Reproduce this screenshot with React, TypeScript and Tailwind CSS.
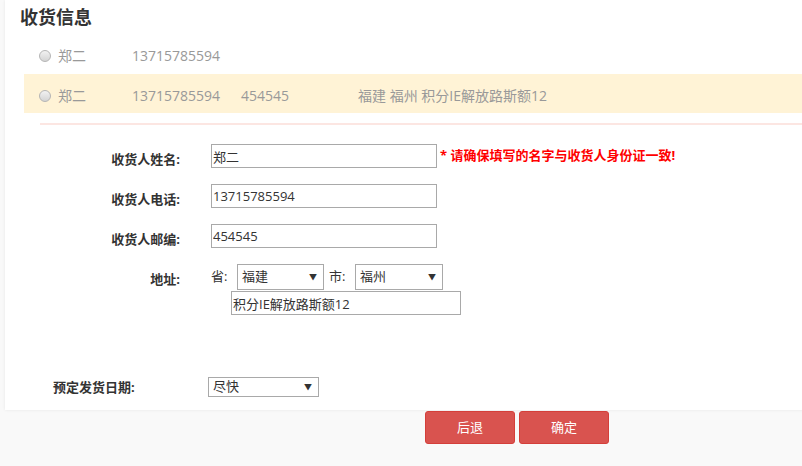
import { useState } from 'react';

const FONT = '"Open Sans", "Noto Sans CJK SC", sans-serif';

type Addr = { name: string; phone: string; zip?: string; address?: string };

const addresses: Addr[] = [
  { name: '郑二', phone: '13715785594' },
  { name: '郑二', phone: '13715785594', zip: '454545', address: '福建 福州 积分IE解放路斯额12' },
];

function Radio() {
  return (
    <span className="inline-block w-[12px] h-[12px] rounded-full border border-[#b5b5b5] bg-gradient-to-b from-[#f2f2f2] to-[#d4d4d4]" />
  );
}

function Select({ value, width, height }: { value: string; width: string; height: string }) {
  return (
    <div className={`relative ${width} ${height} border border-[#a9a9a9] bg-white flex items-center`}>
      <span className="pl-[4px] text-[13px] text-[#333]">{value}</span>
      <span className="absolute right-[6px] top-1/2 -translate-y-1/2 text-[8px] text-[#333] leading-none">▼</span>
    </div>
  );
}

function Field({ label, value }: { label: string; value: string }) {
  return (
    <div className="flex items-center h-[40px]">
      <div className="w-[175px] pt-[7px] text-right text-[13px] font-bold text-[#333]">{label}</div>
      <input
        defaultValue={value}
        className="ml-[31px] w-[226px] h-[24px] border border-[#a9a9a9] px-[1px] text-[13px] text-[#333] outline-none"
      />
    </div>
  );
}

export default function App() {
  const [selected] = useState<number | null>(null);

  return (
    <div className="w-[802px] h-[466px] bg-[#f9f9f9] overflow-hidden" style={{ fontFamily: FONT }}>
      <div className="ml-[5px] w-[820px] h-[410px] bg-white shadow-[0_0_3px_rgba(0,0,0,0.08)] flex flex-col">
        <div className="h-[37px] pl-[15px] pt-[4px] text-[18px] font-bold text-[#333] leading-[27px]">收货信息</div>

        <div className="flex flex-col">
          {addresses.map((a, i) => (
            <div
              key={i}
              className={
                i === 1
                  ? 'ml-[19px] h-[39px] pt-[4px] bg-[#fff3d6] flex items-center text-[14px] text-[#999]'
                  : 'ml-[19px] h-[37px] flex items-center text-[14px] text-[#999]'
              }
            >
              <span className="ml-[15px] w-[19px] flex items-center">
                <Radio />
              </span>
              <span className="w-[74px]">{a.name}</span>
              <span className="w-[109px]">{a.phone}</span>
              {a.zip && <span className="w-[117px]">{a.zip}</span>}
              {a.address && <span>{a.address}</span>}
              {selected === i && null}
            </div>
          ))}
        </div>

        <div className="ml-[35px] mt-[10px] h-[2px] bg-[#fce6e2]" />

        <div className="mt-[11px] flex flex-col">
          <div className="flex items-center">
            <Field label="收货人姓名:" value="郑二" />
            <span className="ml-[3px] text-[13px] font-bold text-[#ff0000]">* 请确保填写的名字与收货人身份证一致!</span>
          </div>
          <Field label="收货人电话:" value="13715785594" />
          <Field label="收货人邮编:" value="454545" />

          <div className="flex items-start mt-[8px]">
            <div className="w-[175px] text-right text-[13px] font-bold text-[#333] pt-[6px]">地址:</div>
            <div className="ml-[31px] flex flex-col">
              <div className="flex items-center text-[13px] text-[#333]">
                <span className="w-[26px]">省:</span>
                <Select value="福建" width="w-[87px]" height="h-[26px]" />
                <span className="ml-[5px] w-[26px]">市:</span>
                <Select value="福州" width="w-[88px]" height="h-[26px]" />
              </div>
              <input
                defaultValue="积分IE解放路斯额12"
                className="ml-[20px] mt-[1px] w-[230px] h-[24px] border border-[#a9a9a9] px-[1px] text-[13px] text-[#333] outline-none"
              />
            </div>
          </div>

          <div className="flex items-center mt-[61px]">
            <div className="ml-[48px] w-[155px] pt-[2px] text-[13px] font-bold text-[#333]">预定发货日期:</div>
            <Select value="尽快" width="w-[111px]" height="h-[20px]" />
          </div>
        </div>
      </div>

      <div className="flex gap-[4px] ml-[425px] mt-[1px]">
        <button className="w-[90px] h-[33px] rounded-[3px] bg-[#d9534f] border border-[#d43f3a] text-white text-[13px]">后退</button>
        <button className="w-[90px] h-[33px] rounded-[3px] bg-[#d9534f] border border-[#d43f3a] text-white text-[13px]">确定</button>
      </div>
    </div>
  );
}
